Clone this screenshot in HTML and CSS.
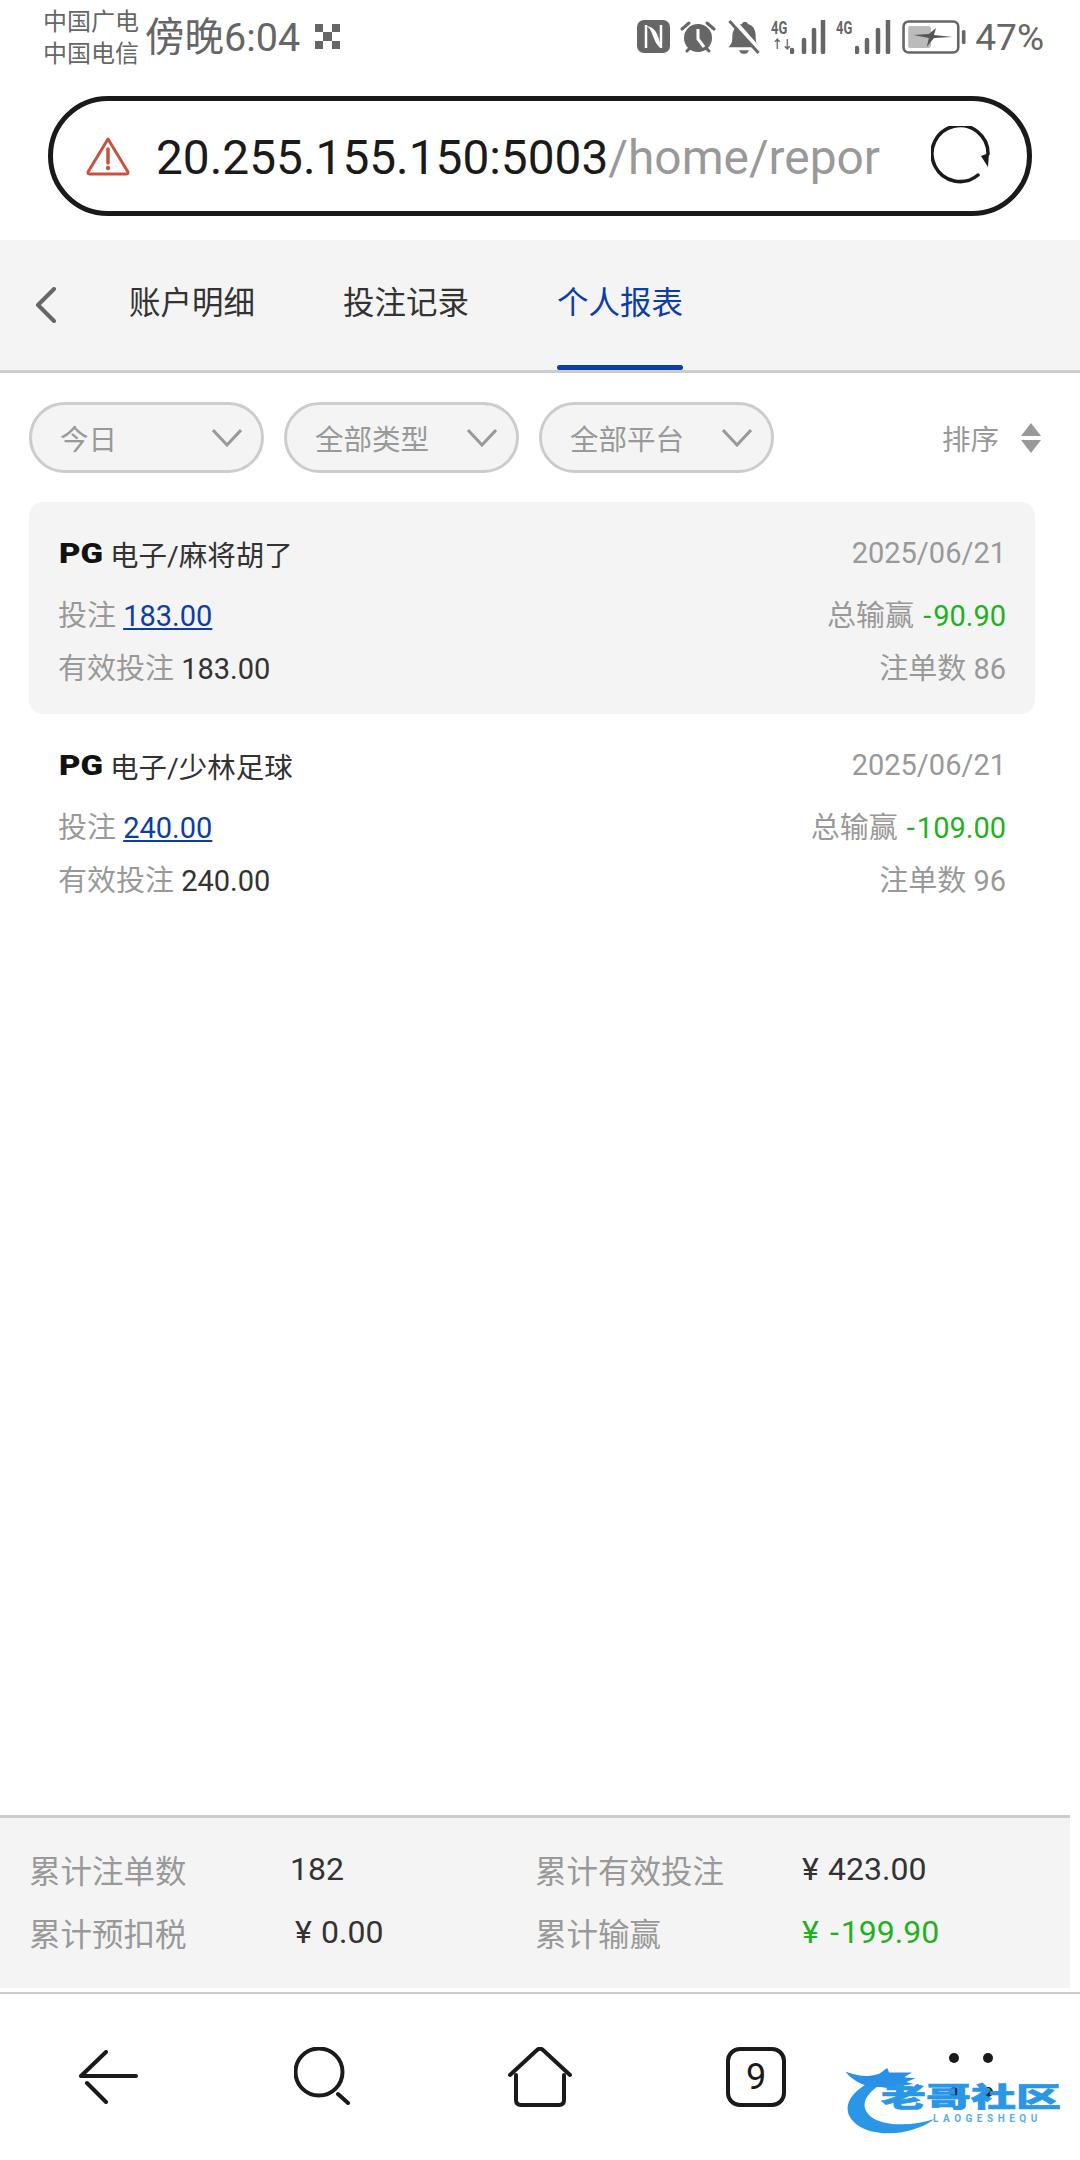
FILE: index.html
```html
<!DOCTYPE html>
<html lang="zh-CN">
<head>
<meta charset="utf-8">
<title>个人报表</title>
<link rel="stylesheet" href="styles.css">
</head>
<body>
<div class="page">
  <header class="status">
    <div class="carriers"><span>中国广电</span><span>中国电信</span></div>
    <div class="time">傍晚6:04</div>
    <svg class="ic-grid" viewBox="0 0 25 25"><path fill="#666" d="M0 0h8v8H0zM17 0h8v8h-8zM8 8h9v9H8zM0 17h8v8H0zM17 17h8v8h-8z"/></svg>
    <div class="status-right">
      <svg class="ic-nfc" viewBox="0 0 33 33"><rect width="33" height="33" rx="7" fill="#666"/><path d="M9 5v23M24 5v23" stroke="#fff" stroke-width="2.500"/><path d="M8 6c5 1 6 5 8 10s4 11 9 12c-3-7-3-10-5-14S15 6 8 6z" fill="#fff"/></svg>
      <svg class="ic-alarm" viewBox="0 0 36 34"><circle cx="18" cy="18" r="14" fill="#666"/><path d="M18 9v10l6 8" fill="none" stroke="#fff" stroke-width="3"/><path d="M2 9l7-6M34 9l-7-6M7 31l3-3M29 31l-3-3" stroke="#666" stroke-width="3" stroke-linecap="round"/></svg>
      <svg class="ic-bell" viewBox="0 0 32 36"><path fill="#666" d="M0 28c3-3 4-5 4-11 0-7 4-12 10-13 1-3 5-3 6 0 6 2 8 6 8 13 0 6 1 8 4 11z"/><path fill="#666" d="M11 31h10c-1 5-9 5-10 0z"/><path d="M3 -1l29 33" stroke="#fff" stroke-width="6"/><path d="M1 1l30 33" stroke="#666" stroke-width="3"/></svg>
      <div class="signal">
        <div class="sig-tags"><span class="sig-4g">4G</span><span class="sig-arrows">↑↓</span></div>
        <svg class="ic-bars" viewBox="0 0 36 34"><path d="M2 30v2M14 20v12M24 10v22M33 1v31" stroke="#666" stroke-width="4.500" stroke-linecap="round"/></svg>
      </div>
      <div class="signal second">
        <div class="sig-tags"><span class="sig-4g">4G</span></div>
        <svg class="ic-bars" viewBox="0 0 36 34"><path d="M2 28v4M12 20v12M23 10v22M33 1v31" stroke="#666" stroke-width="4.500" stroke-linecap="round"/></svg>
      </div>
      <svg class="ic-batt" viewBox="0 0 62 34" preserveAspectRatio="none"><rect x="1.500" y="1.500" width="53" height="31" rx="5" fill="none" stroke="#666" stroke-width="2.500"/><rect x="6" y="6" width="22" height="22" rx="2" fill="#bbb"/><path fill="#555" d="M11 15l15-1 7-6-2 7 18 2-18 1-7 9 2-9z"/><rect x="58" y="10" width="3.500" height="14" rx="1.500" fill="#666"/></svg>
      <span class="pct">47%</span>
    </div>
  </header>

  <div class="urlbar">
    <div class="pill">
      <svg class="ic-warn" viewBox="0 0 44 40"><path d="M22 3L2 36q-.5 2 2 2h36q2.500 0 2-2z" fill="none" stroke="#c9523f" stroke-width="3" stroke-linejoin="round"/><path d="M22 13v14" stroke="#c9523f" stroke-width="3.500" stroke-linecap="round"/><circle cx="22" cy="32" r="2.200" fill="#c9523f"/></svg>
      <div class="url"><span class="host">20.255.155.150:5003</span><span class="path">/home/repor</span></div>
      <svg class="ic-reload" viewBox="0 0 60 60"><path d="M47 49A28 28 0 1 1 57 28" fill="none" stroke="#1a1a1a" stroke-width="3.500" stroke-linecap="round"/><path d="M50 30l8-3-1 14z" fill="#1a1a1a"/></svg>
    </div>
  </div>

  <nav class="tabs">
    <svg class="ic-back" viewBox="0 0 22 36"><path d="M19 2L3 18l16 16" fill="none" stroke="#666" stroke-width="4" stroke-linecap="round" stroke-linejoin="round"/></svg>
    <a class="tab">账户明细</a>
    <a class="tab">投注记录</a>
    <a class="tab active">个人报表</a>
  </nav>

  <div class="filters">
    <div class="select"><span>今日</span><svg class="ic-chev" viewBox="0 0 30 18"><path d="M1 1l14 15L29 1" fill="none" stroke="#999" stroke-width="3"/></svg></div>
    <div class="select"><span>全部类型</span><svg class="ic-chev" viewBox="0 0 30 18"><path d="M1 1l14 15L29 1" fill="none" stroke="#999" stroke-width="3"/></svg></div>
    <div class="select"><span>全部平台</span><svg class="ic-chev" viewBox="0 0 30 18"><path d="M1 1l14 15L29 1" fill="none" stroke="#999" stroke-width="3"/></svg></div>
    <div class="sort"><span>排序</span><svg class="ic-sort" viewBox="0 0 20 30"><path fill="#999" d="M10 0l10 13H0zM10 30L0 17h20z"/></svg></div>
  </div>

  <main class="list">
    <article class="card shaded">
      <div class="row title-row"><div class="title"><b class="pg">PG</b><span>电子/麻将胡了</span></div><span class="muted">2025/06/21</span></div>
      <div class="row"><div><span class="muted">投注 </span><a class="link">183.00</a></div><div><span class="muted">总输赢 </span><span class="green"><i class="dash">-</i>90.90</span></div></div>
      <div class="row"><div><span class="muted">有效投注 </span><span>183.00</span></div><div class="muted">注单数 86</div></div>
    </article>
    <article class="card">
      <div class="row title-row"><div class="title"><b class="pg">PG</b><span>电子/少林足球</span></div><span class="muted">2025/06/21</span></div>
      <div class="row"><div><span class="muted">投注 </span><a class="link">240.00</a></div><div><span class="muted">总输赢 </span><span class="green"><i class="dash">-</i>109.00</span></div></div>
      <div class="row"><div><span class="muted">有效投注 </span><span>240.00</span></div><div class="muted">注单数 96</div></div>
    </article>
  </main>

  <section class="summary">
    <span class="s-label">累计注单数</span><span class="s-val">182</span>
    <span class="s-label">累计有效投注</span><span class="s-val"><i class="yen">¥</i>423.00</span>
    <span class="s-label">累计预扣税</span><span class="s-val shift"><i class="yen">¥</i>0.00</span>
    <span class="s-label">累计输赢</span><span class="s-val green"><i class="yen">¥</i><i class="dash">-</i>199.90</span>
  </section>

  <footer class="nav">
    <svg class="ic-nav-back" viewBox="0 0 60 54"><path d="M28 2L3 26h55M28 52L9 33" fill="none" stroke="#1a1a1a" stroke-width="4" stroke-linecap="round" stroke-linejoin="round"/></svg>
    <svg class="ic-nav-search" viewBox="0 0 56 58"><circle cx="25" cy="25" r="23.500" fill="none" stroke="#1a1a1a" stroke-width="4"/><path d="M44 47l10 9" stroke="#1a1a1a" stroke-width="4" stroke-linecap="round"/></svg>
    <svg class="ic-nav-home" viewBox="0 0 64 60"><path d="M2 28L29 3q3-2.500 6 0l27 25" fill="none" stroke="#1a1a1a" stroke-width="4" stroke-linecap="round"/><path d="M8 28v25q0 5 5 5h38q5 0 5-5V28" fill="none" stroke="#1a1a1a" stroke-width="4" stroke-linecap="round"/></svg>
    <div class="tabs-count">9</div>
    <svg class="ic-nav-more" viewBox="0 0 44 44"><circle cx="5" cy="5" r="5" fill="#1a1a1a"/><circle cx="39" cy="5" r="5" fill="#1a1a1a"/><circle cx="5" cy="39" r="5" fill="#1a1a1a"/><circle cx="39" cy="39" r="5" fill="#1a1a1a"/></svg>
    <div class="watermark">
      <svg class="wm-dragon" viewBox="0 0 100 74"><path fill="#2a96e8" d="M26 18C4 30-4 48 14 62c18 13 56 13 82-6-24 8-54 8-68-3C18 44 20 32 38 20z"/><path fill="#2a8fe6" d="M2 6c14 5 26 6 36 2l8-6 2 5 24 0-8 5 12 1-10 4 8 2-20 3c-8 3-14-1-24 0C18 20 8 14 2 6z"/></svg>
      <div class="wm-name">老哥社区</div>
      <div class="wm-sub">LAOGESHEQU</div>
    </div>
  </footer>
</div>
</body>
</html>
```
FILE: styles.css
```css
* { box-sizing: border-box; }
html, body { margin: 0; padding: 0; background: #fff; }
body { font-family: Roboto, "Noto Sans CJK SC", sans-serif; color: #333; }
.page { width: 1080px; height: 2160px; display: flex; flex-direction: column; overflow: hidden; }

.status { height: 96px; flex: none; display: flex; align-items: flex-start; padding: 6px 36px 0 43px; color: #666; }
.carriers { display: flex; flex-direction: column; font-size: 24px; line-height: 32px; width: 102px; flex: none; }
.time { font-size: 39.500px; line-height: 44px; margin-top: 10px; width: 170px; flex: none; }
.ic-grid { width: 25px; height: 25px; margin-top: 18px; flex: none; }
.status-right { margin-left: auto; display: flex; align-items: flex-start; margin-top: 14px; }
.ic-nfc { width: 33px; height: 33px; }
.ic-alarm { width: 36px; height: 34px; margin-left: 10px; }
.ic-bell { width: 34px; height: 35px; margin-left: 11px; }
.signal { display: flex; margin-left: 10px; align-items: flex-end; height: 34px; }
.signal.second { margin-left: 10px; }
.sig-tags { display: flex; flex-direction: column; width: 19px; height: 34px; color: #666; }
.sig-4g { font-size: 18px; line-height: 15px; font-weight: 700; display: block; width: 24px; transform: scaleX(.72); transform-origin: left; }
.sig-arrows { font-size: 12px; line-height: 20px; letter-spacing: -2px; font-weight: 700; }
.ic-bars { width: 36px; height: 34px; }
.ic-batt { width: 64px; height: 34px; margin-left: 11px; }
.pct { font-size: 37px; line-height: 42px; margin-left: 9px; margin-top: -3px; }

.urlbar { height: 144px; flex: none; padding: 0 48px; }
.pill { width: 984px; height: 120px; border: 5px solid #1a1a1a; border-radius: 60px; display: flex; align-items: center; padding: 0 36px 0 33px; background: #fff; }
.ic-warn { width: 44px; height: 40px; flex: none; }
.url { margin-left: 26px; font-size: 47.800px; line-height: 60px; padding-top: 3px; white-space: nowrap; color: #1a1a1a; flex: none; }
.url .path { color: #999; }
.ic-reload { width: 60px; height: 60px; margin-left: auto; flex: none; }

.tabs { height: 133px; flex: none; background: #f4f4f4; border-bottom: 3px solid #ccc; display: flex; align-items: center; padding-left: 35px; }
.ic-back { width: 22px; height: 36px; flex: none; margin-right: 72px; }
.tab { position: relative; height: 130px; line-height: 128px; font-size: 31.500px; color: #333; margin-right: 88px; }
.tab.active { color: #0d3da6; }
.tab.active::after { content: ""; position: absolute; left: 0; right: 0; bottom: 0; height: 5px; border-radius: 3px; background: #0d3da6; }

.filters { flex: none; display: flex; align-items: center; padding: 29px 39px 29px 29px; gap: 20px; }
.select { width: 235px; height: 71px; border: 3px solid #ccc; border-radius: 36px; background: #f4f4f4; display: flex; align-items: center; justify-content: space-between; padding: 0 19px 0 28px; font-size: 28.500px; color: #999; }
.ic-chev { width: 30px; height: 18px; flex: none; }
.sort { margin-left: auto; display: flex; align-items: center; font-size: 28.500px; color: #999; gap: 22px; }
.ic-sort { width: 20px; height: 30px; }

.list { flex: 1; min-height: 0; padding: 0 45px 0 29px; }
.card { height: 212px; border-radius: 14px; padding: 23px 29px 0; font-size: 29px; }
.card.shaded { background: #f4f4f4; }
.row { display: flex; justify-content: space-between; align-items: center; height: 53px; white-space: nowrap; }
.title-row { height: 56px; margin-bottom: 5px; }
.title { display: flex; align-items: center; color: #333; font-size: 28.500px; }
.pg { font-weight: 900; font-size: 28px; width: 51px; color: #111; margin-left: 1px; display: block; transform: scaleX(1.18); transform-origin: left; }
.muted { color: #999; }
.link { color: #0d3da6; text-decoration: underline; }
.green { color: #1fb21f; }
.dash { font-style: normal; padding: 0 2px; }

.summary { width: 1070px; height: 173px; flex: none; background: #f4f4f4; border-top: 3px solid #ccc; display: grid; grid-template-columns: 261px 245px 267px 1fr; grid-auto-rows: 63px; align-items: center; padding: 19px 0 0 29px; font-size: 31.500px; color: #333; }
.s-label { color: #999; }
.s-val { font-size: 32px; }
.yen { font-style: normal; display: inline-block; width: 26px; }
.shift { padding-left: 5px; }

.nav { position: relative; margin-top: 4px; height: 168px; flex: none; border-top: 2px solid #ccc; background: #fff; display: flex; align-items: flex-start; padding: 53px 0 0 78px; }
.ic-nav-back { width: 60px; height: 54px; margin-top: 3px; flex: none; }
.ic-nav-search { width: 56px; height: 58px; margin-left: 156px; flex: none; }
.ic-nav-home { width: 64px; height: 60px; margin-left: 158px; flex: none; }
.tabs-count { width: 60px; height: 60px; margin-left: 154px; border: 4px solid #1a1a1a; border-radius: 14px; display: flex; align-items: center; justify-content: center; font-size: 36px; font-weight: 400; color: #1a1a1a; flex: none; }
.ic-nav-more { width: 44px; height: 44px; margin-left: 163px; margin-top: 6px; flex: none; }
.watermark { position: absolute; left: 843px; top: 72px; width: 222px; height: 70px; }
.wm-dragon { position: absolute; left: 0; top: 0; width: 96px; height: 70px; }
.wm-name { position: absolute; left: 38px; top: 2px; font-size: 45px; line-height: 60px; font-weight: 900; color: #2a96e8; transform: scaleY(.6); -webkit-text-stroke: 1px #2a96e8; white-space: nowrap; }
.wm-sub { position: absolute; left: 90px; top: 47px; font-size: 10px; line-height: 12px; letter-spacing: 4.500px; color: #5aaee8; font-weight: 700; white-space: nowrap; }
```
